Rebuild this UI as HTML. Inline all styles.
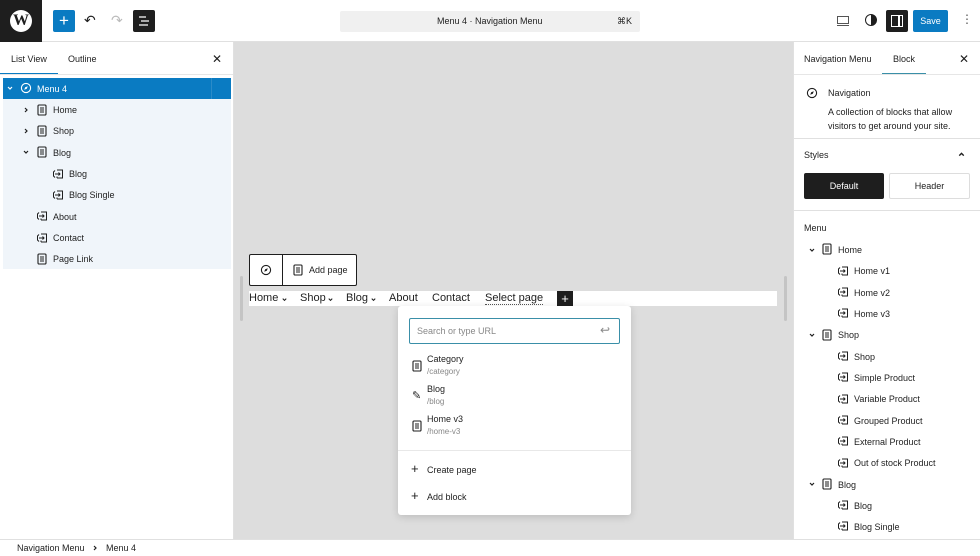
<!DOCTYPE html>
<html><head><meta charset="utf-8"><style>
*{box-sizing:border-box;margin:0;padding:0}
body{width:980px;height:556px;overflow:hidden;font-family:"Liberation Sans",sans-serif;font-size:9px;color:#1e1e1e;background:#fff;position:relative}
.a{position:absolute}
svg{display:block}
.t{position:absolute;white-space:nowrap}
</style></head><body>
<svg width="0" height="0" style="position:absolute"><defs>
<symbol id="pg" viewBox="0 0 12 12"><rect x="2" y="1" width="8" height="10" rx="1" fill="none" stroke="#1e1e1e" stroke-width="1.1"/><path d="M4 4h4M4 6h4M4 8h4" stroke="#1e1e1e" stroke-width="1"/></symbol>
<symbol id="lk" viewBox="0 0 12 12"><path d="M5 2H10.5V10H5M5 8.5V10M3 2.5L1.5 4V8L3 9.5" fill="none" stroke="#1e1e1e" stroke-width="1"/><path d="M3 6H8M6.5 4.5L8 6L6.5 7.5" fill="none" stroke="#1e1e1e" stroke-width="1"/></symbol>
<symbol id="cp" viewBox="0 0 12 12"><circle cx="6" cy="6" r="4.6" fill="none" stroke="currentColor" stroke-width="1.1"/><path d="M7.8 4.2L6.8 6.8L4.2 7.8L5.2 5.2Z" fill="currentColor"/></symbol>
<symbol id="dn" viewBox="0 0 8 8"><path d="M2 3L4 5L6 3" fill="none" stroke="currentColor" stroke-width="1.2"/></symbol>
<symbol id="rt" viewBox="0 0 8 8"><path d="M3 2L5 4L3 6" fill="none" stroke="currentColor" stroke-width="1.2"/></symbol>
</defs></svg>

<div class="a" style="left:0;top:0;width:980px;height:42px;border-bottom:1px solid #e0e0e0;background:#fff"></div>
<div class="a" style="left:0;top:0;width:42px;height:42px;background:#1e1e1e"></div>
<div class="a" style="left:10px;top:10px;width:22px;height:22px;border-radius:50%;background:#fff;color:#1e1e1e;font:bold 16px 'Liberation Serif',serif;text-align:center;line-height:22px">W</div>
<div class="a" style="left:53px;top:10px;width:22px;height:22px;background:#0a7bc2;border-radius:2px;color:#fff;font-size:17px;text-align:center;line-height:21px">+</div>
<div class="t" style="left:84px;top:12px;font-size:14px">↶</div>
<div class="t" style="left:111px;top:12px;font-size:14px;color:#bbb">↷</div>
<div class="a" style="left:133px;top:10px;width:22px;height:22px;background:#1e1e1e;border-radius:2px"><svg width="22" height="22"><path d="M6 7h7M8 11h8M6 15h9" stroke="#fff" stroke-width="1.3"/></svg></div>
<div class="a" style="left:340px;top:11px;width:300px;height:21px;background:#f0f0f0;border-radius:2px"></div>
<div class="t" style="left:437px;top:16px;font-size:9px">Menu 4 · Navigation Menu</div>
<div class="t" style="left:617px;top:16px;font-size:9px">⌘K</div>
<div class="a" style="left:837px;top:16px;width:12px;height:8px;border:1px solid #555"></div>
<div class="a" style="left:837px;top:25px;width:12px;height:1px;background:#555"></div>
<div class="a" style="left:865px;top:14px;width:12px;height:12px;border:1.5px solid #1e1e1e;border-radius:50%;background:linear-gradient(90deg,#fff 50%,#1e1e1e 50%)"></div>
<div class="a" style="left:886px;top:10px;width:22px;height:22px;background:#1e1e1e;border-radius:2px"><div class="a" style="left:5px;top:5px;width:12px;height:12px;border:1.5px solid #fff"></div><div class="a" style="left:12px;top:5px;width:1.5px;height:12px;background:#fff"></div></div>
<div class="a" style="left:913px;top:10px;width:35px;height:22px;background:#0a7bc2;border-radius:2px;color:#fff;font-size:9px;text-align:center;line-height:22px">Save</div>
<div class="t" style="left:961px;top:12px;font-size:12px;color:#555">⋮</div>

<div class="a" style="left:0;top:42px;width:234px;height:497px;border-right:1px solid #e0e0e0;background:#fff"></div>
<div class="t" style="left:11px;top:54px">List View</div>
<div class="t" style="left:68px;top:54px">Outline</div>
<div class="a" style="left:0;top:73px;width:58px;height:2px;background:#0a7bc2"></div>
<div class="a" style="left:0;top:74px;width:233px;height:1px;background:#e6e6e6"></div>
<div class="t" style="left:212px;top:52px;font-size:12px">✕</div>
<div class="a" style="left:3px;top:78px;width:228px;height:191px;background:#f0f5fa"></div>
<div class="a" style="left:3px;top:78px;width:228px;height:21px;background:#0a7bc2"></div>
<div class="a" style="left:211px;top:78px;width:1px;height:21px;background:#2b8bc8"></div>
<svg class="a" style="left:6px;top:84px;color:#fff" width="8" height="8"><use href="#dn"/></svg>
<div class="a" style="left:20px;top:82px;color:#fff"><svg width="12" height="12"><use href="#cp"/></svg></div>
<div class="t" style="left:37px;top:84px;color:#fff">Menu 4</div>

<svg class="a" style="left:22px;top:106px" width="8" height="8"><use href="#rt"/></svg><svg class="a" style="left:36px;top:104px" width="12" height="12"><use href="#pg"/></svg><div class="t" style="left:53px;top:105px">Home</div>
<svg class="a" style="left:22px;top:127px" width="8" height="8"><use href="#rt"/></svg><svg class="a" style="left:36px;top:125px" width="12" height="12"><use href="#pg"/></svg><div class="t" style="left:53px;top:126px">Shop</div>
<svg class="a" style="left:22px;top:148px" width="8" height="8"><use href="#dn"/></svg><svg class="a" style="left:36px;top:146px" width="12" height="12"><use href="#pg"/></svg><div class="t" style="left:53px;top:148px">Blog</div>
<svg class="a" style="left:52px;top:168px" width="12" height="12"><use href="#lk"/></svg><div class="t" style="left:69px;top:169px">Blog</div>
<svg class="a" style="left:52px;top:189px" width="12" height="12"><use href="#lk"/></svg><div class="t" style="left:69px;top:190px">Blog Single</div>
<svg class="a" style="left:36px;top:210px" width="12" height="12"><use href="#lk"/></svg><div class="t" style="left:53px;top:212px">About</div>
<svg class="a" style="left:36px;top:232px" width="12" height="12"><use href="#lk"/></svg><div class="t" style="left:53px;top:233px">Contact</div>
<svg class="a" style="left:36px;top:253px" width="12" height="12"><use href="#pg"/></svg><div class="t" style="left:53px;top:254px">Page Link</div>

<div class="a" style="left:234px;top:42px;width:559px;height:497px;background:#dddddd"></div>
<div class="a" style="left:240px;top:276px;width:3px;height:45px;background:#c4c4c4;border-radius:2px"></div>
<div class="a" style="left:784px;top:276px;width:3px;height:45px;background:#c4c4c4;border-radius:2px"></div>
<div class="a" style="left:249px;top:254px;width:108px;height:32px;background:#fff;border:1px solid #1e1e1e;border-radius:2px"></div>
<div class="a" style="left:282px;top:254px;width:1px;height:32px;background:#1e1e1e"></div>
<div class="a" style="left:260px;top:264px"><svg width="12" height="12"><use href="#cp"/></svg></div>
<svg class="a" style="left:292px;top:264px" width="12" height="12"><use href="#pg"/></svg>
<div class="t" style="left:309px;top:265px">Add page</div>
<div class="a" style="left:249px;top:291px;width:528px;height:15px;background:#fff"></div>
<div class="t" style="left:249px;top:292px;font-size:11px">Home</div><svg class="a" style="left:281px;top:296px" width="7" height="7"><use href="#dn"/></svg>
<div class="t" style="left:300px;top:292px;font-size:11px">Shop</div><svg class="a" style="left:327px;top:296px" width="7" height="7"><use href="#dn"/></svg>
<div class="t" style="left:346px;top:292px;font-size:11px">Blog</div><svg class="a" style="left:370px;top:296px" width="7" height="7"><use href="#dn"/></svg>
<div class="t" style="left:389px;top:292px;font-size:11px">About</div>
<div class="t" style="left:432px;top:292px;font-size:11px">Contact</div>
<div class="t" style="left:485px;top:292px;font-size:11px;border-bottom:1px dotted #555">Select page</div>
<div class="a" style="left:557px;top:291px;width:16px;height:15px;background:#1e1e1e;color:#fff;text-align:center;font-size:13px;line-height:15px">+</div>

<div class="a" style="left:398px;top:306px;width:233px;height:209px;background:#fff;border-radius:3px;box-shadow:0 2px 8px rgba(0,0,0,.15)"></div>
<div class="a" style="left:409px;top:318px;width:211px;height:26px;border:1.5px solid #3a8fa8;border-radius:2px"></div>
<div class="t" style="left:417px;top:326px;color:#888">Search or type URL</div>
<div class="t" style="left:600px;top:323px;color:#888;font-size:12px">↩</div>
<svg class="a" style="left:411px;top:360px" width="12" height="12"><use href="#pg"/></svg>
<div class="t" style="left:427px;top:354px">Category</div><div class="t" style="left:427px;top:367px;color:#888;font-size:8px">/category</div>
<div class="t" style="left:412px;top:389px;font-size:11px">✎</div>
<div class="t" style="left:427px;top:384px">Blog</div><div class="t" style="left:427px;top:397px;color:#888;font-size:8px">/blog</div>
<svg class="a" style="left:411px;top:420px" width="12" height="12"><use href="#pg"/></svg>
<div class="t" style="left:427px;top:414px">Home v3</div><div class="t" style="left:427px;top:427px;color:#888;font-size:8px">/home-v3</div>
<div class="a" style="left:398px;top:450px;width:233px;height:1px;background:#e8e8e8"></div>
<div class="t" style="left:411px;top:461px;font-size:13px">+</div><div class="t" style="left:427px;top:465px">Create page</div>
<div class="t" style="left:411px;top:488px;font-size:13px">+</div><div class="t" style="left:427px;top:492px">Add block</div>

<div class="a" style="left:793px;top:42px;width:187px;height:497px;border-left:1px solid #e0e0e0;background:#fff"></div>
<div class="t" style="left:804px;top:54px">Navigation Menu</div>
<div class="t" style="left:893px;top:54px">Block</div>
<div class="a" style="left:882px;top:73px;width:44px;height:2px;background:#3a8fa8"></div>
<div class="a" style="left:794px;top:74px;width:186px;height:1px;background:#e6e6e6"></div>
<div class="t" style="left:959px;top:52px;font-size:12px">✕</div>
<div class="a" style="left:806px;top:87px"><svg width="12" height="12"><use href="#cp"/></svg></div>
<div class="t" style="left:828px;top:88px">Navigation</div>
<div class="t" style="left:828px;top:105px;line-height:14px">A collection of blocks that allow<br>visitors to get around your site.</div>
<div class="a" style="left:794px;top:138px;width:186px;height:1px;background:#e0e0e0"></div>
<div class="t" style="left:804px;top:150px">Styles</div>
<svg class="a" style="left:957px;top:150px;transform:rotate(180deg)" width="9" height="9"><use href="#dn"/></svg>
<div class="a" style="left:804px;top:173px;width:80px;height:26px;background:#1e1e1e;border-radius:2px;color:#fff;text-align:center;line-height:26px">Default</div>
<div class="a" style="left:889px;top:173px;width:81px;height:26px;border:1px solid #ddd;border-radius:2px;text-align:center;line-height:24px">Header</div>
<div class="a" style="left:794px;top:210px;width:186px;height:1px;background:#e0e0e0"></div>
<div class="t" style="left:804px;top:223px">Menu</div>

<svg class="a" style="left:808px;top:246px" width="8" height="8"><use href="#dn"/></svg><svg class="a" style="left:821px;top:243px" width="12" height="12"><use href="#pg"/></svg><div class="t" style="left:838px;top:245px">Home</div>
<svg class="a" style="left:837px;top:265px" width="12" height="12"><use href="#lk"/></svg><div class="t" style="left:854px;top:266px">Home v1</div>
<svg class="a" style="left:837px;top:286px" width="12" height="12"><use href="#lk"/></svg><div class="t" style="left:854px;top:288px">Home v2</div>
<svg class="a" style="left:837px;top:307px" width="12" height="12"><use href="#lk"/></svg><div class="t" style="left:854px;top:309px">Home v3</div>
<svg class="a" style="left:808px;top:331px" width="8" height="8"><use href="#dn"/></svg><svg class="a" style="left:821px;top:329px" width="12" height="12"><use href="#pg"/></svg><div class="t" style="left:838px;top:330px">Shop</div>
<svg class="a" style="left:837px;top:350px" width="12" height="12"><use href="#lk"/></svg><div class="t" style="left:854px;top:352px">Shop</div>
<svg class="a" style="left:837px;top:371px" width="12" height="12"><use href="#lk"/></svg><div class="t" style="left:854px;top:373px">Simple Product</div>
<svg class="a" style="left:837px;top:393px" width="12" height="12"><use href="#lk"/></svg><div class="t" style="left:854px;top:394px">Variable Product</div>
<svg class="a" style="left:837px;top:414px" width="12" height="12"><use href="#lk"/></svg><div class="t" style="left:854px;top:416px">Grouped Product</div>
<svg class="a" style="left:837px;top:435px" width="12" height="12"><use href="#lk"/></svg><div class="t" style="left:854px;top:437px">External Product</div>
<svg class="a" style="left:837px;top:457px" width="12" height="12"><use href="#lk"/></svg><div class="t" style="left:854px;top:458px">Out of stock Product</div>
<svg class="a" style="left:808px;top:480px" width="8" height="8"><use href="#dn"/></svg><svg class="a" style="left:821px;top:478px" width="12" height="12"><use href="#pg"/></svg><div class="t" style="left:838px;top:480px">Blog</div>
<svg class="a" style="left:837px;top:499px" width="12" height="12"><use href="#lk"/></svg><div class="t" style="left:854px;top:501px">Blog</div>
<svg class="a" style="left:837px;top:520px" width="12" height="12"><use href="#lk"/></svg><div class="t" style="left:854px;top:522px">Blog Single</div>

<div class="a" style="left:0;top:539px;width:980px;height:17px;background:#fff;border-top:1px solid #e0e0e0"></div>
<div class="t" style="left:17px;top:543px">Navigation Menu</div>
<svg class="a" style="left:91px;top:544px" width="8" height="8"><use href="#rt"/></svg>
<div class="t" style="left:106px;top:543px">Menu 4</div>
</body></html>
